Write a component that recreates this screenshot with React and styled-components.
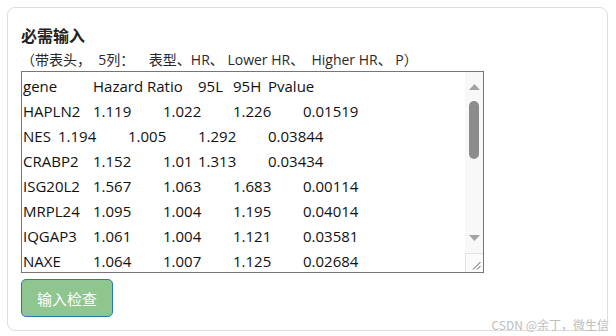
import React from "react"
import styled, { createGlobalStyle } from "styled-components"

const GlobalStyle = createGlobalStyle`
  html, body {
    margin: 0;
    padding: 0;
    background: #ffffff;
  }
  body {
    font-family: "Open Sans", "Noto Sans CJK SC", sans-serif;
    color: #222;
  }
`

const Page = styled.div`
  position: relative;
  width: 616px;
  height: 336px;
  padding: 7px 8px 5px 7px;
  box-sizing: border-box;
`

const Card = styled.section`
  height: 100%;
  border: 1px solid #dedede;
  border-radius: 8px;
  box-sizing: border-box;
  padding: 16px 13px 13px 13px;
  display: flex;
  flex-direction: column;
  align-items: flex-start;
`

const Title = styled.h4`
  margin: 0;
  font-family: "Noto Sans CJK SC", sans-serif;
  font-size: 16px;
  font-weight: 700;
  line-height: 22px;
  color: #222;
`

const Hint = styled.p`
  margin: 3px 0 0 0;
  font-family: "Open Sans", "Noto Sans CJK SC", sans-serif;
  font-size: 14px;
  line-height: 22px;
  white-space: pre;
  color: #2a2a2a;
`

const TextBox = styled.div`
  width: 463px;
  height: 202px;
  border: 1px solid #767676;
  box-sizing: border-box;
  display: flex;
  background: #fff;
`

const Content = styled.div`
  flex: 1;
  overflow: hidden;
  padding: 2px 0 0 1px;
  white-space: pre;
  tab-size: 35px;
  -moz-tab-size: 35px;
  font-family: "Open Sans", sans-serif;
  font-size: 15px;
  line-height: 25px;
  color: #111;
`

const Track = styled.div`
  width: 18px;
  background: #f8f8f8;
  display: flex;
  flex-direction: column;
`

const ArrowButton = styled.div`
  height: ${p => p.$h}px;
  box-sizing: border-box;
  padding-top: ${p => p.$top}px;
  display: flex;
  justify-content: center;
  align-items: flex-start;
`

const Rail = styled.div`
  flex: 1;
  display: flex;
  justify-content: center;
  align-items: flex-start;
`

const Thumb = styled.div`
  width: 10px;
  height: 58px;
  border-radius: 5px;
  background: #8c8c8c;
`

const Resizer = styled.div`
  height: 19px;
  border-top: 1px solid #e2e2e2;
  border-left: 1px solid #e2e2e2;
  box-sizing: border-box;
  display: flex;
  justify-content: flex-end;
  align-items: flex-end;
  padding: 0 2px 2px 0;
  background: #fbfbfb;
`

const CheckButton = styled.button`
  margin-top: 6px;
  width: 92px;
  height: 39px;
  border: 1px solid #2a78b3;
  border-radius: 5px;
  background: #8fc58f;
  color: #fff;
  font-family: "Noto Sans CJK SC", sans-serif;
  font-size: 15px;
  padding: 0;
  cursor: pointer;
`

const Watermark = styled.span`
  position: absolute;
  right: 7px;
  bottom: 4px;
  font-family: "Noto Sans CJK SC", sans-serif;
  font-size: 12px;
  line-height: 14px;
  color: #bdbdbd;
`

const rows = [
  ["gene", "Hazard Ratio", "95L", "95H", "Pvalue"],
  ["HAPLN2", "1.119", "1.022", "1.226", "0.01519"],
  ["NES", "1.194", "1.005", "1.292", "0.03844"],
  ["CRABP2", "1.152", "1.01", "1.313", "0.03434"],
  ["ISG20L2", "1.567", "1.063", "1.683", "0.00114"],
  ["MRPL24", "1.095", "1.004", "1.195", "0.04014"],
  ["IQGAP3", "1.061", "1.004", "1.121", "0.03581"],
  ["NAXE", "1.064", "1.007", "1.125", "0.02684"],
]

const Arrow = ({ down }) => (
  <svg width="11" height="6" viewBox="0 0 11 6">
    <polygon
      points={down ? "0,0 11,0 5.5,6" : "0,6 11,6 5.5,0"}
      fill="#a3a3a3"
    />
  </svg>
)

const Grip = () => (
  <svg width="9" height="9" viewBox="0 0 9 9">
    <line x1="8.5" y1="1" x2="1" y2="8.5" stroke="#555" strokeWidth="1" />
    <line x1="8.5" y1="5" x2="5" y2="8.5" stroke="#555" strokeWidth="1" />
  </svg>
)

const App = () => {
  const text = rows.map(r => r.join("\t")).join("\n")

  return (
    <Page>
      <GlobalStyle />
      <Card>
        <Title>必需输入</Title>
        <Hint>{"（带表头，  5列：    表型、HR、 Lower HR、  Higher HR、 P）"}</Hint>
        <TextBox>
          <Content>{text}</Content>
          <Track>
            <ArrowButton $h={29} $top={12}>
              <Arrow />
            </ArrowButton>
            <Rail>
              <Thumb />
            </Rail>
            <ArrowButton $h={28} $top={10}>
              <Arrow down />
            </ArrowButton>
            <Resizer>
              <Grip />
            </Resizer>
          </Track>
        </TextBox>
        <CheckButton>输入检查</CheckButton>
      </Card>
      <Watermark>CSDN @余丁，微生信</Watermark>
    </Page>
  )
}

export default App
